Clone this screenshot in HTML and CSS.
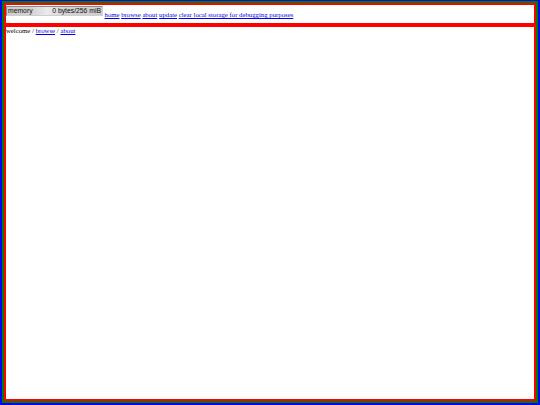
FILE: index.html
```html
<!DOCTYPE html>
<html>
<head>
<meta charset="utf-8">
<link rel="stylesheet" href="styles.css">
</head>
<body>
<div class="app">
  <header class="top">
    <div class="memory"><span>memory</span><span>0 bytes/256 miB</span></div>
    <nav class="nav"><a href="#">home</a> <a href="#">browse</a> <a href="#">about</a> <a href="#">update</a> <a href="#">clear local storage for debugging purposes</a></nav>
  </header>
  <main class="content">
    <div class="crumbs">welcome / <a href="#">browse</a> / <a href="#">about</a></div>
  </main>
</div>
</body>
</html>
```
FILE: styles.css
```css
html, body {
  margin: 0;
  padding: 0;
  height: 100%;
}
body {
  box-sizing: border-box;
  border: 2px solid #0000ff;
  border-top-width: 1px;
  background: #fff;
  display: flex;
  flex-direction: column;
  font-family: "Liberation Serif", serif;
  font-size: 6.75px;
}
.app {
  flex: 1;
  display: flex;
  flex-direction: column;
  border: 2px solid #008000;
}
.top {
  border: 2px solid #ff0000;
  height: 18px;
  box-sizing: content-box;
  display: flex;
  align-items: flex-start;
  padding: 0;
}
.memory {
  box-sizing: border-box;
  margin-top: 1px;
  width: 97px;
  height: 10px;
  border: 1px solid #8a8a8a;
  border-right-color: #cfcfcf;
  border-bottom-color: #cfcfcf;
  background: linear-gradient(to right, #cdcdcd 0%, #d2d2d2 25%, #ebebeb 42%, #d6d6d6 58%, #cdcdcd 100%);
  display: flex;
  justify-content: space-between;
  align-items: center;
  padding: 0 1px 0 1px;
  font-family: "Liberation Sans", Arial, sans-serif;
  font-size: 6.8px;
  color: #111;
  line-height: 8px;
}
.nav {
  margin-top: 6px;
  margin-left: 1.5px;
  white-space: nowrap;
}
a {
  color: #0000ee;
}
.content {
  flex: 1;
  border: 2px solid #ff0000;
}
.crumbs {
  margin: 0;
}
```
